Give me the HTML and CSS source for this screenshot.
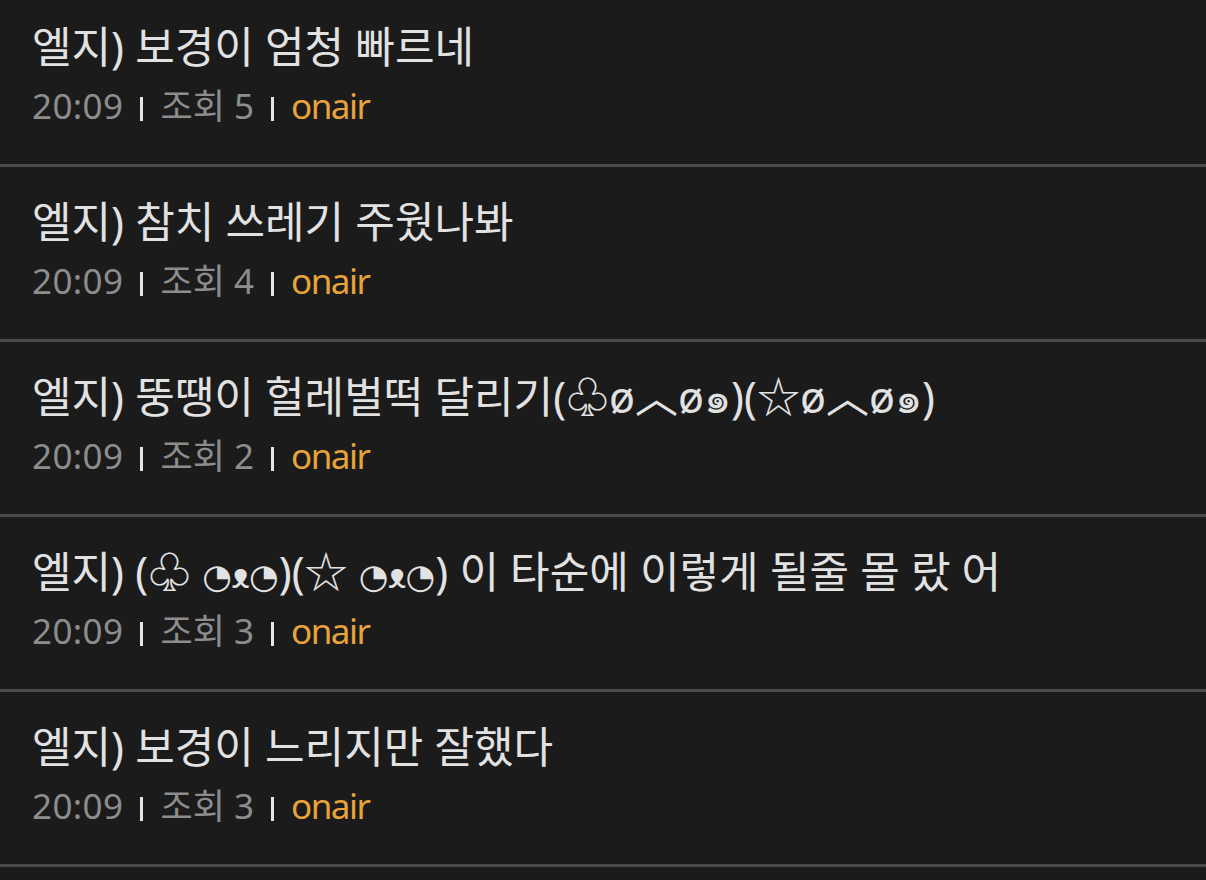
FILE: index.html
```html
<!DOCTYPE html>
<html lang="ko">
<head>
<meta charset="utf-8">
<link rel="stylesheet" href="styles.css">
</head>
<body>
<ul class="list">
  <li class="item">
    <div class="title">엘지) 보경이 엄청 빠르네</div>
    <div class="meta"><span class="time">20:09</span><span class="sep"></span><span class="views">조회 5</span><span class="sep"></span><span class="cat">onair</span></div>
  </li>
  <li class="item">
    <div class="title">엘지) 참치 쓰레기 주웠나봐</div>
    <div class="meta"><span class="time">20:09</span><span class="sep"></span><span class="views">조회 4</span><span class="sep"></span><span class="cat">onair</span></div>
  </li>
  <li class="item">
    <div class="title">엘지) 뚱땡이 헐레벌떡 달리기(♧ø︿ø๑)(☆ø︿ø๑)</div>
    <div class="meta"><span class="time">20:09</span><span class="sep"></span><span class="views">조회 2</span><span class="sep"></span><span class="cat">onair</span></div>
  </li>
  <li class="item">
    <div class="title">엘지) (♧ <span class="eye">◔ᴥ◔</span>)(☆ <span class="eye">◔ᴥ◔</span>) 이 타순에 이렇게 될줄 몰 랐 어</div>
    <div class="meta"><span class="time">20:09</span><span class="sep"></span><span class="views">조회 3</span><span class="sep"></span><span class="cat">onair</span></div>
  </li>
  <li class="item">
    <div class="title">엘지) 보경이 느리지만 잘했다</div>
    <div class="meta"><span class="time">20:09</span><span class="sep"></span><span class="views">조회 3</span><span class="sep"></span><span class="cat">onair</span></div>
  </li>
</ul>
</body>
</html>
```
FILE: styles.css
```css
html, body {
  margin: 0;
  padding: 0;
  background: #1b1b1b;
  height: 100%;
  overflow: hidden;
}
body {
  font-family: "Noto Sans", "Noto Sans CJK KR", "DejaVu Sans", sans-serif;
}
.list {
  list-style: none;
  margin: -8px 0 0 0;
  padding: 0;
}
.item {
  height: 172px;
  box-sizing: content-box;
  padding: 0 0 0 32px;
  border-bottom: 3px solid #4a4a4a;
  display: flex;
  flex-direction: column;
}
.title {
  margin-top: 30px;
  height: 50px;
  line-height: 50px;
  font-size: 43px;
  color: #e2e2e2;
  white-space: nowrap;
}
.eye {
  font-size: 34px;
}
.meta {
  margin-top: 10px;
  height: 48px;
  line-height: 48px;
  font-size: 35px;
  color: #8d8d8d;
  display: flex;
  align-items: center;
  white-space: nowrap;
}
.time {
  letter-spacing: 0.4px;
}
.sep {
  display: inline-block;
  width: 3px;
  height: 24px;
  background: #e6e6e6;
  margin: 6px 17px 0 17px;
}
.cat {
  color: #e9a33b;
  letter-spacing: -1.5px;
}
```
